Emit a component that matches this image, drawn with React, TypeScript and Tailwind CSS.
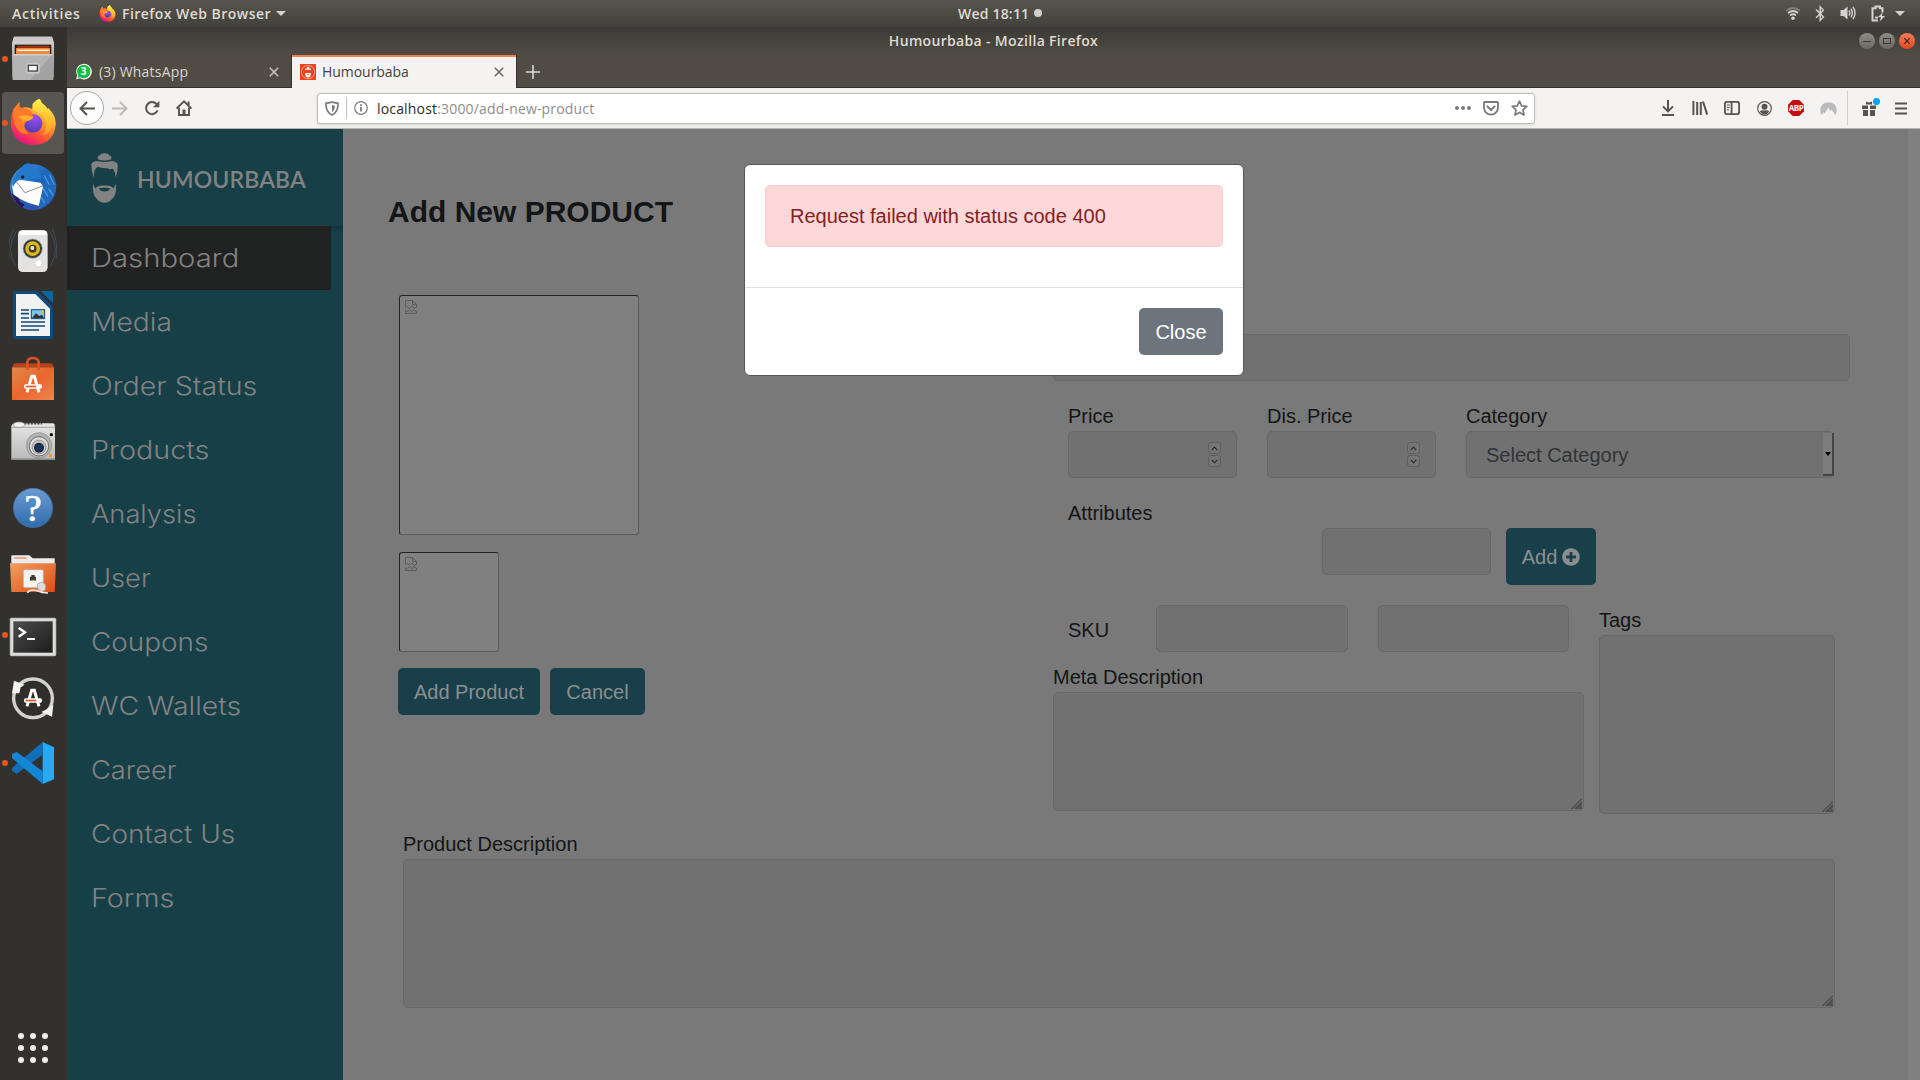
import type { ReactNode } from 'react';
import { FaBluetoothB, FaPlusCircle } from 'react-icons/fa';

function DockItem({ box, running, active, children }: { box: string; running?: boolean; active?: boolean; children: ReactNode }) {
  return (
    <div className="relative flex h-16 w-[67px] shrink-0 items-center pl-[2px]">
      <div className={active ? 'flex h-[62px] w-[62px] items-center justify-center rounded bg-[#575651]' : 'flex h-[62px] w-[62px] items-center justify-center'}>
        <svg width="48" height="48" viewBox={box}>{children}</svg>
      </div>
      {running && <span className="absolute left-[2px] top-[29px] h-[6px] w-[6px] rounded-full bg-[#e95420]" />}
    </div>
  );
}

function FirefoxArt({ id }: { id: string }) {
  return (
    <>
      <defs>
        <linearGradient id={id + 'a'} x1="0.85" y1="0.1" x2="0.3" y2="1">
          <stop offset="0" stopColor="#fff44f" />
          <stop offset="0.35" stopColor="#ffa52e" />
          <stop offset="0.7" stopColor="#ff4b3a" />
          <stop offset="1" stopColor="#e3108a" />
        </linearGradient>
        <radialGradient id={id + 'b'} cx="0.6" cy="0.2" r="0.8">
          <stop offset="0" stopColor="#a04cf0" />
          <stop offset="1" stopColor="#4b3fb8" />
        </radialGradient>
        <linearGradient id={id + 'c'} x1="0.5" y1="0" x2="0.5" y2="1">
          <stop offset="0" stopColor="#fff14a" />
          <stop offset="1" stopColor="#ff9a1f" />
        </linearGradient>
      </defs>
      <path d="M41 87 L58 66 L58 80 L64 84 Q80 78 99 88 L97 72 Q104 62 119 56 Q122 68 136 78 L142 88 L145 84 Q170 110 167 135 Q160 195 99 195 Q40 192 33 137 Q31 108 41 87Z" fill={'url(#' + id + 'a)'} />
      <path d="M97 88 Q95 66 119 56 Q122 68 136 78 Q156 98 158 126 Q154 158 130 166 Q150 128 124 104 Q112 96 97 88Z" fill={'url(#' + id + 'c)'} />
      <circle cx="99" cy="130" r="28" fill={'url(#' + id + 'b)'} />
      <path d="M41 87 L58 66 L58 80 L64 84 Q80 82 94 93 L100 112 L84 122 Q72 128 73 140 Q77 156 90 162 Q58 168 44 132 Q38 108 41 87Z" fill="#ff7a2a" />
      <path d="M52 110 Q76 100 98 112 Q100 118 86 122 Q72 120 70 128 Q66 112 52 110Z" fill="#ffb02c" />
    </>
  );
}

function AppLetter({ x, y }: { x: number; y: number }) {
  return (
    <g transform={`translate(${x} ${y})`} fill="none" stroke="#fff">
      <path d="M-18 26 L-4 -22 H4 L18 26" strokeWidth="9" />
      <rect x="-27" y="2" width="54" height="13" rx="5" fill="#fff" stroke="none" />
      <rect x="-22" y="6" width="32" height="5" fill="#e95420" stroke="none" />
    </g>
  );
}

function Dock() {
  return (
    <aside className="flex h-full w-[67px] shrink-0 flex-col bg-[#33312d]">
      <DockItem box="27 105 144 144" running>
        <defs>
          <linearGradient id="cab" x1="0" y1="0" x2="0" y2="1"><stop offset="0" stopColor="#d8d8d8" /><stop offset="1" stopColor="#8c8c8c" /></linearGradient>
        </defs>
        <path d="M42 110 H156 L162 128 V232 H36 V128Z" fill="url(#cab)" />
        <path d="M42 110 H156 L160 124 H38Z" fill="#c9c9c9" />
        <rect x="44" y="134" width="110" height="32" fill="#3a1d10" />
        <rect x="52" y="138" width="96" height="5" fill="#b33a0e" />
        <rect x="48" y="144" width="102" height="20" fill="#f08a3a" />
        <rect x="52" y="149" width="96" height="4" fill="#fff" />
        <path d="M40 163 H158 L160 240 H38Z" fill="#a2a2a2" />
        <path d="M40 163 H158 L90 240 H38Z" fill="#b4b4b4" />
        <rect x="40" y="163" width="118" height="3" fill="#dedede" />
        <rect x="79" y="189" width="40" height="32" rx="5" fill="#c9c9c9" />
        <rect x="85" y="196" width="27" height="17" fill="#fafafa" stroke="#444" strokeWidth="4" />
      </DockItem>
      <DockItem box="27 57 144 144" running active><FirefoxArt id="dock" /></DockItem>
      <DockItem box="27 249 144 144">
        <defs>
          <linearGradient id="tb" x1="0" y1="0" x2="1" y2="1"><stop offset="0" stopColor="#3fa3e4" /><stop offset="0.5" stopColor="#1f62bc" /><stop offset="1" stopColor="#3b3f9c" /></linearGradient>
        </defs>
        <circle cx="99" cy="322" r="69" fill="url(#tb)" />
        <path d="M30 330 Q34 372 70 392 L30 392Z" fill="#33312d" />
        <path d="M36 318 L48 298 L122 308 L130 322 L118 378 L84 368 L42 348Z" fill="#fdfdfd" />
        <path d="M50 306 L75 338 L128 318" fill="none" stroke="#8f8f8f" strokeWidth="3" />
        <path d="M64 262 Q78 246 92 251 Q88 258 100 262 Q124 276 124 300 Q112 294 98 298 Q80 288 64 298 Q50 300 38 322 Q38 288 64 262Z" fill="#2479cc" />
        <path d="M122 272 Q138 300 128 326 L114 388 Q168 370 169 316 Q164 282 140 266Z" fill="#2268bd" />
        <path d="M132 286 L148 314 M148 284 L163 314 M130 326 L144 350 M146 326 L160 346 M124 352 L134 370" stroke="#46a2e0" strokeWidth="3.5" />
        <path d="M34 340 L56 354 L60 366 L74 372 L66 384 Q44 368 34 340Z" fill="#27145c" />
        <circle cx="68" cy="291" r="5" fill="#221c28" />
      </DockItem>
      <DockItem box="27 441 144 144">
        <g fill="none" stroke="#3c4c5e" strokeWidth="3">
          <path d="M50 452 Q32 480 32 508 Q32 534 46 556 M42 446 Q20 486 28 536 M148 452 Q166 480 166 508 Q166 534 152 556 M156 446 Q176 486 168 536" />
        </g>
        <rect x="54" y="450" width="89" height="126" rx="14" fill="#e4e3e2" />
        <rect x="57" y="453" width="83" height="12" rx="6" fill="#fff" />
        <circle cx="98" cy="506" r="29" fill="#3a3a3a" stroke="#9aa" strokeWidth="2" />
        <circle cx="98" cy="506" r="22" fill="#d9bb1c" />
        <circle cx="98" cy="506" r="12" fill="#4a3f10" />
        <circle cx="97" cy="504" r="6" fill="#e8e8e8" />
        <circle cx="116" cy="550" r="11" fill="#fff" stroke="#c9c9c9" strokeWidth="2" />
        <circle cx="76" cy="554" r="7" fill="none" stroke="#dadada" strokeWidth="2" />
      </DockItem>
      <DockItem box="27 633 144 144">
        <path d="M45 633 H112 L159 680 V771 Q159 777 153 777 H45 Q39 777 39 771 V639 Q39 633 45 633Z" fill="#0f4a7a" />
        <path d="M122 633 H159 V670Z" fill="#0b659f" />
        <path d="M48 642 H106 L150 686 V768 H48Z" fill="#f2f2f2" />
        <path d="M63 690 h24 M63 701 h24 M63 714 h24 M63 726 h72 M63 738 h72 M63 750 h54" stroke="#0f4a7a" strokeWidth="5" />
        <rect x="94" y="689" width="40" height="27" fill="#7cc4e8" stroke="#0f4a7a" strokeWidth="3" />
        <path d="M96 714 L108 700 L118 708 L126 704 L132 714Z" fill="#333" />
        <circle cx="127" cy="696" r="5" fill="#e8b930" />
      </DockItem>
      <DockItem box="27 825 144 144">
        <defs>
          <linearGradient id="bag" x1="0" y1="0" x2="1" y2="1"><stop offset="0" stopColor="#e08a4a" /><stop offset="0.5" stopColor="#e9662e" /><stop offset="1" stopColor="#f28350" /></linearGradient>
        </defs>
        <path d="M42 850 H156 L162 862 H36Z" fill="#b8401a" />
        <rect x="36" y="862" width="126" height="98" fill="url(#bag)" />
        <path d="M82 870 V846 Q84 834 99 834 Q114 834 116 846 V870" fill="none" stroke="#d9521f" strokeWidth="8" />
        <AppLetter x={99} y={911} />
      </DockItem>
      <DockItem box="27 -33 144 144">
        <defs><linearGradient id="cam" x1="0" y1="0" x2="0" y2="1"><stop offset="0" stopColor="#e6e6e6" /><stop offset="1" stopColor="#b9b9b9" /></linearGradient></defs>
        <path d="M34 -10 Q34 -17 44 -20 H160 Q165 -18 165 -8 V89 H34Z" fill="url(#cam)" />
        <path d="M72 -19 H126" stroke="#555" strokeWidth="5" strokeDasharray="7 3" />
        <path d="M34 -8 H165" stroke="#a8a8a8" strokeWidth="3" />
        <ellipse cx="57" cy="-16" rx="17" ry="8" fill="#f2f2f2" stroke="#999" strokeWidth="2" />
        <circle cx="117" cy="46" r="38" fill="#b2b2b2" stroke="#8a8a8a" strokeWidth="2" />
        <circle cx="117" cy="49" r="29" fill="#dedede" stroke="#6f6f6f" strokeWidth="3" />
        <circle cx="117" cy="51" r="21" fill="#c4c4c4" stroke="#777" strokeWidth="2" />
        <circle cx="117" cy="53" r="15" fill="#23272e" />
        <rect x="108" y="45" width="18" height="16" fill="#10366e" />
        <circle cx="154" cy="14" r="5" fill="#111" />
        <rect x="147" y="71" width="9" height="10" fill="#f0a020" />
        <rect x="34" y="85" width="131" height="4" fill="#8a8a8a" />
      </DockItem>
      <DockItem box="27 159 144 144">
        <defs><linearGradient id="hp" x1="0" y1="0" x2="0" y2="1"><stop offset="0" stopColor="#6b9bd2" /><stop offset="1" stopColor="#2f6cab" /></linearGradient></defs>
        <circle cx="99" cy="234" r="59" fill="url(#hp)" stroke="#3f6ea8" strokeWidth="2" />
        <text x="99" y="274" textAnchor="middle" fontFamily="Liberation Serif, serif" fontSize="116" fill="#fff" stroke="#fff" strokeWidth="2">?</text>
      </DockItem>
      <DockItem box="27 351 144 144">
        <defs><linearGradient id="fd" x1="0" y1="0" x2="1" y2="1"><stop offset="0" stopColor="#f0a060" /><stop offset="1" stopColor="#e04a12" /></linearGradient></defs>
        <path d="M34 378 Q34 376 38 376 H88 L98 385 H164 V410 H34Z" fill="#ececec" />
        <path d="M42 384 h38" stroke="#e8a070" strokeWidth="5" />
        <path d="M30 400 H168 L164 486 H34Z" fill="url(#fd)" />
        <rect x="70" y="419" width="60" height="54" rx="4" fill="#f3f3f3" stroke="#b8a898" strokeWidth="2" />
        <path d="M90 452 V440 H94 V435 H104 V440 H108 V452Z" fill="#3a3a3a" />
        <rect x="93" y="450" width="12" height="3" fill="#c8b030" />
        <path d="M112 462 L126 456 L137 464 L136 480 L124 485 L113 476Z" fill="#ddd" stroke="#999" strokeWidth="2" />
        <path d="M82 488 Q90 476 112 482 Q126 488 144 489" fill="none" stroke="#eee" strokeWidth="5" />
      </DockItem>
      <DockItem box="27 543 144 144" running>
        <defs><linearGradient id="tm" x1="0" y1="0" x2="1" y2="1"><stop offset="0" stopColor="#4c4c4c" /><stop offset="1" stopColor="#1c1c1c" /></linearGradient></defs>
        <rect x="30" y="564" width="138" height="114" rx="4" fill="#dcdcdc" stroke="#9a9a9a" strokeWidth="2" />
        <rect x="40" y="574" width="118" height="94" fill="url(#tm)" />
        <path d="M56 594 L75 607 L56 620" fill="none" stroke="#fff" strokeWidth="7" />
        <path d="M81 627 h24" stroke="#fff" strokeWidth="6" />
      </DockItem>
      <DockItem box="27 735 144 144">
        <circle cx="99" cy="805" r="64" fill="#4a4946" />
        <circle cx="99" cy="805" r="58" fill="#2f2e2b" stroke="#d2d2d0" strokeWidth="10" />
        <path d="M42 752 L74 764 L62 772 L58 790 L36 790Z" fill="#f2f2f2" />
        <path d="M160 824 L156 860 L124 846 L140 838Z" fill="#f2f2f2" />
        <AppLetter x={99} y={803} />
      </DockItem>
      <DockItem box="27 927 144 144" running>
        <path d="M128 936 L162 952 V1048 L128 1062Z" fill="#29a9f2" />
        <path d="M128 936 V974 L50 1032 L36 1022 V1014Z" fill="#0f6fb8" />
        <path d="M36 972 L50 966 L128 1024 V1062 L36 984Z" fill="#1487d4" />
      </DockItem>
      <div className="mt-auto flex h-16 w-[66px] items-center justify-center">
        <div className="grid grid-cols-3 gap-[6px]">
          {Array.from({ length: 9 }, (_, i) => <span key={i} className="h-[6px] w-[6px] rounded-full bg-[#eeeeec]" />)}
        </div>
      </div>
    </aside>
  );
}

function TopBar() {
  return (
    <header className="flex h-[27px] shrink-0 items-center bg-linear-to-b from-[#59554d] to-[#42413c] pb-px font-['Open_Sans',sans-serif] text-[14px] font-semibold text-[#dedbd3]">
      <div className="flex h-full w-[900px] items-center">
        <span className="ml-3 w-[87px] tracking-[0.72px]">Activities</span>
        <svg width="17" height="17" viewBox="27 53 144 144"><FirefoxArt id="bar" /></svg>
        <span className="ml-[6px] tracking-[0.46px]">Firefox Web Browser</span>
        <span className="ml-[5px] border-x-[5px] border-t-[5px] border-x-transparent border-t-[#d5d2ca]" />
      </div>
      <div className="flex items-center pl-[58px]">
        <span className="tracking-[0.2px]">Wed 18:11</span>
        <span className="ml-[5px] h-2 w-2 rounded-full bg-[#d0d0ce]" />
      </div>
      <div className="ml-auto flex items-center pr-[15px] text-[#d5d3cf]">
        <svg width="16" height="16" viewBox="0 0 16 16" fill="none" stroke="currentColor" strokeWidth="1.8">
          <path d="M1.2 5.6Q8 0.4 14.8 5.6" stroke="#85827b" />
          <path d="M3 8Q8 4 13 8M5 10.4Q8 8 11 10.4" />
          <circle cx="8" cy="13.2" r="1.8" fill="currentColor" stroke="none" />
        </svg>
        <FaBluetoothB className="ml-3 h-[17px] w-[14px]" />
        <svg className="ml-[13px]" width="17" height="16" viewBox="0 0 17 16" fill="none" stroke="currentColor" strokeWidth="1.4">
          <path d="M0.5 5H3.5L7.5 1.5V14.5L3.5 11H0.5Z" fill="currentColor" stroke="none" />
          <path d="M9 5.5Q10.6 8 9 10.5M11 3.6Q13.6 8 11 12.4M13 1.8Q17 8 13 14.2" />
        </svg>
        <svg className="ml-[13px]" width="16" height="17" viewBox="0 0 16 17" fill="none" stroke="currentColor" strokeWidth="2">
          <path d="M12.5 7.5V3.2H10V1.4H5.5V3.2H2.5V15.4H8" />
          <path d="M5 12.6H8" />
          <path d="M12.8 7.4L7.8 12.2H11L9.6 16.4L15 11H11.8Z" fill="currentColor" stroke="none" />
        </svg>
        <span className="ml-[9px] border-x-[5px] border-t-[5px] border-x-transparent border-t-[#d5d2ca]" />
      </div>
    </header>
  );
}

function CloseX({ color }: { color: string }) {
  return <svg width="10" height="10" viewBox="0 0 10 10" stroke={color} strokeWidth="1.5"><path d="M0.8 0.8L9.2 9.2M9.2 0.8L0.8 9.2" /></svg>;
}

function TitleAndTabs() {
  return (
    <div className="shrink-0 font-['Open_Sans',sans-serif]">
      <div className="relative flex h-[28px] items-center justify-center bg-linear-to-b from-[#3b3a36] to-[#504c44] pb-[2px] text-[14px] font-semibold tracking-[0.33px] text-[#dfdbd2]">
        <span>Humourbaba - Mozilla Firefox</span>
        <div className="absolute right-[5px] top-[6px] flex gap-1">
          <span className="flex h-4 w-4 items-center justify-center rounded-full bg-linear-to-b from-[#8f8d86] to-[#6a6861]"><i className="h-[1px] w-2 bg-[#3b3a36]" /></span>
          <span className="flex h-4 w-4 items-center justify-center rounded-full bg-linear-to-b from-[#8f8d86] to-[#6a6861]"><i className="h-[6px] w-2 border border-[#3b3a36]" /></span>
          <span className="flex h-4 w-4 items-center justify-center rounded-full bg-linear-to-b from-[#f47b5a] to-[#df4a1c]">
            <svg width="6" height="6" viewBox="0 0 6 6" stroke="#45231a" strokeWidth="1.2"><path d="M0.3 0.3L5.7 5.7M5.7 0.3L0.3 5.7" /></svg>
          </span>
        </div>
      </div>
      <div className="flex h-[33px] bg-[#504c44] text-[14px] shadow-[inset_0_-1px_0_#33312d]">
        <div className="flex h-full w-[224px] items-center pl-2">
          <svg width="17" height="17" viewBox="0 0 17 17">
            <path d="M1 16.5L2.2 12.4A7.8 7.8 0 1 1 5 15.3Z" fill="#fff" />
            <circle cx="8.7" cy="8.5" r="6.7" fill="#12c143" />
            <path d="M2.6 15L3.6 11.5L6 14Z" fill="#12c143" />
            <text x="8.7" y="12.2" textAnchor="middle" fontSize="10" fontWeight="700" fill="#fff" fontFamily="Open Sans, sans-serif">3</text>
          </svg>
          <span className="ml-[7px] tracking-[0.2px] text-[#d9d6cf]">(3) WhatsApp</span>
          <span className="ml-auto mr-[12px]"><CloseX color="#c9c6bf" /></span>
        </div>
        <div className="flex h-full w-[226px] items-center border-x border-[#33312d] border-t-0 bg-[#f4f3f1] pl-2 shadow-[inset_0_2px_0_#f27e52]">
          <svg width="16" height="16" viewBox="0 0 16 16">
            <rect width="16" height="16" fill="#f0411f" />
            <circle cx="8" cy="8" r="6.6" fill="none" stroke="#fbb9a6" strokeWidth="0.9" />
            <path d="M5.2 6.4V4.6H7V3H9.2V4.6H10.8V6.4L10 5.8H6ZM5.2 9H10.8V11L9.4 13.2H6.6L5.2 11ZM7 10H9V10.8H7Z" fill="#fff" fillRule="evenodd" />
          </svg>
          <span className="ml-[6px] tracking-[-0.05px] text-[#45423d]">Humourbaba</span>
          <span className="ml-auto mr-[12px]"><CloseX color="#6a6863" /></span>
        </div>
        <div className="flex w-8 items-center justify-center">
          <svg width="14" height="14" viewBox="0 0 14 14" stroke="#d9d6cf" strokeWidth="1.6"><path d="M7 0V14M0 7H14" /></svg>
        </div>
      </div>
    </div>
  );
}

function Cell({ children }: { children: ReactNode }) {
  return <div className="flex w-8 shrink-0 items-center justify-center">{children}</div>;
}

function Toolbar() {
  return (
    <div className="flex h-[41px] shrink-0 items-center border-b border-[#b9b7b4] bg-[#f4f3f1] pr-[3px] font-['Open_Sans',sans-serif] text-[#56544f]">
      <div className="ml-[3px] flex h-[34px] w-[34px] items-center justify-center rounded-full border border-[#a9a7a4] bg-[#fdfdfd]">
        <svg width="16" height="15" viewBox="0 0 16 15" fill="none" stroke="currentColor" strokeWidth="2"><path d="M16 7.5H1.5M8 1L1.5 7.5L8 14" /></svg>
      </div>
      <Cell><svg width="16" height="15" viewBox="0 0 16 15" fill="none" stroke="#bdbbb8" strokeWidth="2"><path d="M0 7.5H14.5M8 1L14.5 7.5L8 14" /></svg></Cell>
      <Cell>
        <svg width="16" height="16" viewBox="0 0 16 16" fill="none" stroke="currentColor" strokeWidth="2">
          <path d="M13.6 10.4A6 6 0 1 1 12.6 4.2" /><path d="M15.4 0.8V7.2H9Z" fill="currentColor" stroke="none" />
        </svg>
      </Cell>
      <Cell>
        <svg width="16" height="16" viewBox="0 0 16 16" fill="none" stroke="currentColor" strokeWidth="1.9">
          <path d="M0.6 8.6L8 1.4L15.4 8.6" /><path d="M3 7.6V15H13V7.6" /><path d="M8 15V9.6" strokeWidth="3" /><path d="M12.6 1.5V5" />
        </svg>
      </Cell>
      <div className="ml-[117px] flex h-[31px] w-[1218px] items-center rounded-[3px] border border-[#bfbdba] bg-white shadow-[0_1px_3px_rgba(0,0,0,0.12)]">
        <svg className="ml-[7px]" width="14" height="15" viewBox="0 0 14 15" fill="none" stroke="#7b7a78" strokeWidth="1.7">
          <path d="M7 1Q10 2.2 13 2.2Q13.4 11 7 14Q0.6 11 1 2.2Q4 2.2 7 1Z" /><path d="M7 4V11Q9.8 9.4 10 4.8Z" fill="#7b7a78" stroke="none" />
        </svg>
        <span className="ml-[7px] h-[22px] w-px bg-[#c4c2bf]" />
        <svg className="ml-[7px]" width="14" height="14" viewBox="0 0 14 14" fill="none" stroke="#7b7a78">
          <circle cx="7" cy="7" r="6.3" strokeWidth="1.2" /><path d="M7 6V10.6M7 3.2V5" strokeWidth="1.8" />
        </svg>
        <span className="ml-[9px] text-[14px] tracking-[0.17px] text-[#8f8d8b]"><span className="text-[#2b2a28]">localhost</span>:3000/add-new-product</span>
        <div className="ml-auto flex items-center pr-[6px] text-[#7b7a78]">
          <svg width="16" height="4" viewBox="0 0 16 4" fill="currentColor"><circle cx="2" cy="2" r="2" /><circle cx="8" cy="2" r="2" /><circle cx="14" cy="2" r="2" /></svg>
          <svg className="ml-3" width="16" height="15" viewBox="0 0 16 15" fill="none" stroke="currentColor" strokeWidth="1.8">
            <path d="M1 1.6Q1 1 1.6 1H14.4Q15 1 15 1.6V6.6A7 7 0 0 1 1 6.6Z" /><path d="M4.4 5.4L8 9L11.6 5.4" strokeWidth="2" strokeLinecap="round" />
          </svg>
          <svg className="ml-3" width="17" height="16" viewBox="0 0 17 16" fill="none" stroke="currentColor" strokeWidth="1.7" strokeLinejoin="round">
            <path d="M8.5 1.2L10.7 5.8L15.8 6.4L12 9.9L13 15L8.5 12.4L4 15L5 9.9L1.2 6.4L6.3 5.8Z" />
          </svg>
        </div>
      </div>
      <div className="ml-auto flex items-center">
        <Cell><svg width="12" height="16" viewBox="0 0 12 16" fill="none" stroke="currentColor" strokeWidth="2"><path d="M6 0V11M1 6.4L6 11.4L11 6.4M0 15H12" /></svg></Cell>
        <Cell><svg width="16" height="14" viewBox="0 0 16 14" fill="none" stroke="currentColor" strokeWidth="2"><path d="M1.4 0V14M5.2 1V14M8.8 1V14M11 0.5L15.2 13.6" /></svg></Cell>
        <Cell><svg width="16" height="14" viewBox="0 0 16 14" fill="none" stroke="currentColor" strokeWidth="1.8"><rect x="0.9" y="0.9" width="14.2" height="12.2" rx="1.8" /><path d="M7.6 1V13" /><path d="M2.8 4H5.8M2.8 6.4H5.8M2.8 8.8H5" strokeWidth="1" /></svg></Cell>
        <Cell><svg width="15" height="15" viewBox="0 0 15 15"><circle cx="7.5" cy="7.5" r="6.8" fill="none" stroke="currentColor" strokeWidth="1.2" /><circle cx="7.5" cy="5.8" r="3" fill="currentColor" /><path d="M2.6 10.6Q5 8.6 7.5 9.6Q10 8.6 12.4 10.6Q10.6 13.4 7.5 13.4Q4.4 13.4 2.6 10.6Z" fill="currentColor" /></svg></Cell>
        <Cell>
          <svg width="16" height="16" viewBox="0 0 16 16"><path d="M4.7 0H11.3L16 4.7V11.3L11.3 16H4.7L0 11.3V4.7Z" fill="#c70d12" /><text x="8" y="11" textAnchor="middle" fontSize="8" fontWeight="700" fill="#fff" fontFamily="Open Sans, sans-serif" letterSpacing="-0.4">ABP</text></svg>
        </Cell>
        <Cell><svg width="17" height="13" viewBox="0 0 17 13"><path d="M1.8 13Q0 10.6 0.3 8Q1 0.6 8.5 0.3Q16 0.6 16.7 8Q17 10.6 15.2 13L11.6 7.4L10.4 9.2L8.4 5.6L4.8 11.4L3.6 10.2Z" fill="#b9bbbf" /></svg></Cell>
        <span className="ml-[3px] mr-[5px] h-[34px] w-px bg-[#d3d1cf]" />
        <div className="relative flex w-8 items-center justify-center">
          <svg width="14" height="15" viewBox="0 0 14 15" fill="currentColor"><path d="M0 4.4H6V8H0ZM8 4.4H14V8H8ZM1 9H6V15H1ZM8 9H13V15H8ZM4 0.6L7 1.6L10 0.6V3.4H4Z" /></svg>
          <span className="absolute right-[5px] top-[-3px] h-[7px] w-[7px] rounded-full bg-[#00a5f5]" />
        </div>
        <Cell><svg width="12" height="13" viewBox="0 0 12 13" stroke="currentColor" strokeWidth="2"><path d="M0 1.4H12M0 6.5H12M0 11.6H12" /></svg></Cell>
      </div>
    </div>
  );
}

const menu = [
  { label: 'Dashboard', fit: 'scale-x-[1.17]' },
  { label: 'Media', fit: 'scale-x-[1.13]' },
  { label: 'Order Status', fit: 'scale-x-[1.145]' },
  { label: 'Products', fit: 'scale-x-[1.15]' },
  { label: 'Analysis', fit: 'scale-x-[1.09]' },
  { label: 'User', fit: 'scale-x-[1.09]' },
  { label: 'Coupons', fit: 'scale-x-[1.115]' },
  { label: 'WC Wallets', fit: 'scale-x-[1.135]' },
  { label: 'Career', fit: 'scale-x-[1.09]' },
  { label: 'Contact Us', fit: 'scale-x-[1.12]' },
  { label: 'Forms', fit: 'scale-x-[1.15]' },
];

function Sidebar() {
  return (
    <nav className="flex w-[276px] shrink-0 flex-col bg-[#163f48] text-[#828282]">
      <div className="flex h-[97px] shrink-0 items-center pl-6 shadow-[0_3px_4px_rgba(0,0,0,0.2)]">
        <svg width="27" height="50" viewBox="0 0 27 50" fill="currentColor">
          <path d="M7 3.2Q9 2.6 10 1Q13.5 -0.6 17.4 1Q18 2.8 20 3.2Q21 5 19.6 6.6Q13.5 8.4 7.4 6.6Q6.2 5.4 7 3.2Z" />
          <path d="M6.5 8Q13.5 10 20.5 8Q25.6 8.2 26.8 11.4L26.4 18.4L24.6 24.6Q24.2 17.4 21.6 15.8Q19 17 16.6 15.2Q10 15.4 6.4 13.8Q4.6 15.4 3.6 17.4L2.4 24.6L1 18.4L0.2 11.4Q1.4 8.2 6.5 8Z" />
          <path fillRule="evenodd" d="M2 30.4L4.2 35.4Q7.4 31.6 13.5 32.6Q19.6 31.6 22.6 35.4L25 30.4Q25.8 42 21.6 45.4Q18 49.8 13.5 49.8Q9 49.8 5.4 45.4Q1.2 42 2 30.4ZM7.6 35.4Q9.4 38.4 13.5 38.4Q17.6 38.4 19.4 35.4Q13.5 34 7.6 35.4Z" />
        </svg>
        <span className="ml-[19px] mt-1 font-[Lato,sans-serif] text-[23px] font-semibold tracking-[0.15px]">HUMOURBABA</span>
      </div>
      {menu.map((m, i) => (
        <div key={m.label} className={i === 0 ? 'flex h-16 w-[264px] items-center bg-[#202121] pl-[23.5px] pt-[2px]' : 'flex h-16 w-[264px] items-center pl-[23.5px] pt-[2px]'}>
          <span className={'origin-left whitespace-nowrap font-[Inter,sans-serif] text-[25px] font-light ' + m.fit}>{m.label}</span>
        </div>
      ))}
    </nav>
  );
}

function BrokenImage({ size }: { size: string }) {
  return (
    <div className={'rounded-[3px] border border-b-[#5b5b5b] border-l-[#232323] border-r-[#5b5b5b] border-t-[#232323] bg-[#808080] pl-[5px] pt-1 ' + size}>
      <svg width="12" height="14" viewBox="0 0 12 14" fill="none" stroke="#5c5c5c">
        <path d="M0.5 7.5V0.5H7.5L11.5 4.5V8M7.5 0.5V4.5H11.5M0.5 8L2.5 6.5L4.5 8.5L7 6L9 8.5L11.5 7M0.5 13.5V10.5L2.5 11.5L4.5 10L7 11.5L9 10L11.5 11V13.5Z" />
      </svg>
    </div>
  );
}

function Field({ size, children }: { size: string; children?: ReactNode }) {
  return <div className={'relative shrink-0 rounded-[5px] border border-[#686868] bg-[#717171] ' + size}>{children}</div>;
}

function Grip() {
  return <svg className="absolute bottom-[1px] right-[1px]" width="11" height="11" viewBox="0 0 11 11" stroke="#333" fill="none"><path d="M0.5 11L11 0.5M3.5 11L11 3.5M5.5 11L11 5.5M7.5 11L11 7.5M9.5 11L11 9.5" /></svg>;
}

function Spinner() {
  return (
    <div className="absolute right-[15px] top-[10px] flex flex-col gap-px">
      <span className="flex h-3 w-[13px] items-center justify-center rounded-[3px] border border-[#5e5e5e] bg-[#767676]"><svg width="7" height="5" viewBox="0 0 7 5" fill="none" stroke="#2c2c2c" strokeWidth="1.2"><path d="M0.8 4.2L3.5 1.2L6.2 4.2" /></svg></span>
      <span className="flex h-3 w-[13px] items-center justify-center rounded-[3px] border border-[#5e5e5e] bg-[#767676]"><svg width="7" height="5" viewBox="0 0 7 5" fill="none" stroke="#2c2c2c" strokeWidth="1.2"><path d="M0.8 0.8L3.5 3.8L6.2 0.8" /></svg></span>
    </div>
  );
}

function ProductForm() {
  return (
    <main className="w-[1565px] shrink-0 bg-[#797979] text-[20px] leading-[30px] text-[#131517]">
      <h1 className="ml-[45px] mt-[65px] text-[30px] font-bold leading-9">Add New PRODUCT</h1>
      <div className="mt-[65px] flex">
        <div className="w-[710px] shrink-0 pl-[55px]">
          <div className="pl-px"><BrokenImage size="h-[240px] w-[240px]" /></div>
          <div className="mt-[17px] pl-px"><BrokenImage size="h-[100px] w-[100px]" /></div>
          <div className="mt-4 flex gap-[10px] text-[#8c8f90]">
            <button className="h-[47px] w-[142px] rounded-[5px] bg-[#183f4a]">Add Product</button>
            <button className="h-[47px] w-[95px] rounded-[5px] bg-[#183f4a]">Cancel</button>
          </div>
        </div>
        <div className="w-[797px] shrink-0 pt-[39px]">
          <Field size="h-[47px] w-[797px]" />
          <div className="mt-5 flex gap-[30px] pl-[15px]">
            <div><div>Price</div><Field size="h-[47px] w-[169px]"><Spinner /></Field></div>
            <div><div>Dis. Price</div><Field size="h-[47px] w-[169px]"><Spinner /></Field></div>
            <div>
              <div>Category</div>
              <Field size="h-[47px] w-[368px]">
                <div className="flex h-full items-center pl-[19px] text-[#303437]">Select Category</div>
                <div className="absolute -right-px top-[1px] flex h-[43px] w-[11px] items-center justify-center border-b-2 border-r-2 border-[#454545] bg-[#7c7c7c]">
                  <span className="border-x-[3px] border-t-[4px] border-x-transparent border-t-black" />
                </div>
              </Field>
            </div>
          </div>
          <div className="mt-5 pl-[15px]">Attributes</div>
          <div className="flex gap-[15px] pl-[269px]">
            <Field size="h-[47px] w-[169px]" />
            <button className="flex h-[57px] w-[90px] items-center justify-center gap-[5px] rounded-[5px] bg-[#183f4a] text-[#8c8f90]">Add <FaPlusCircle className="h-[18px] w-[18px]" /></button>
          </div>
          <div className="mt-5 flex gap-[15px]">
            <div className="w-[531px]">
              <div className="flex pl-[15px]">
                <span className="w-[88px] pt-[10px]">SKU</span>
                <Field size="h-[47px] w-[192px]" />
                <div className="w-[30px]" />
                <Field size="h-[47px] w-[191px]" />
              </div>
              <div className="mt-[10px]">Meta Description</div>
              <Field size="h-[119px] w-[531px]"><Grip /></Field>
            </div>
            <div>
              <div>Tags</div>
              <Field size="h-[179px] w-[236px]"><Grip /></Field>
            </div>
          </div>
        </div>
      </div>
      <div className="mt-[15px] pl-[60px]">
        <div>Product Description</div>
        <Field size="h-[149px] w-[1432px]"><Grip /></Field>
      </div>
    </main>
  );
}

function ErrorModal() {
  return (
    <div className="absolute left-[677px] top-[35px] w-[500px] rounded-[6px] border border-[#565656] bg-white text-[20px] leading-[30px]">
      <div className="px-5 pb-10 pt-5">
        <div className="flex h-[62px] items-center rounded-[5px] border border-[#fdc9c9] bg-[#fed8d8] pl-[24px] text-[#85211f]">Request failed with status code 400</div>
      </div>
      <div className="flex justify-end border-t border-[#dfe2e5] p-5">
        <button className="h-[47px] w-[84px] rounded-[5px] bg-[#6c757d] text-white">Close</button>
      </div>
    </div>
  );
}

export default function App() {
  return (
    <div className="flex h-[1080px] w-[1920px] flex-col overflow-hidden bg-[#33312d] font-['Liberation_Sans',Arial,sans-serif]">
      <TopBar />
      <div className="flex min-h-0 flex-1">
        <Dock />
        <div className="flex w-[1853px] shrink-0 flex-col">
          <TitleAndTabs />
          <Toolbar />
          <div className="relative flex min-h-0 flex-1">
            <Sidebar />
            <ProductForm />
            <div className="w-3 bg-[#808080]" />
            <ErrorModal />
          </div>
        </div>
      </div>
    </div>
  );
}
